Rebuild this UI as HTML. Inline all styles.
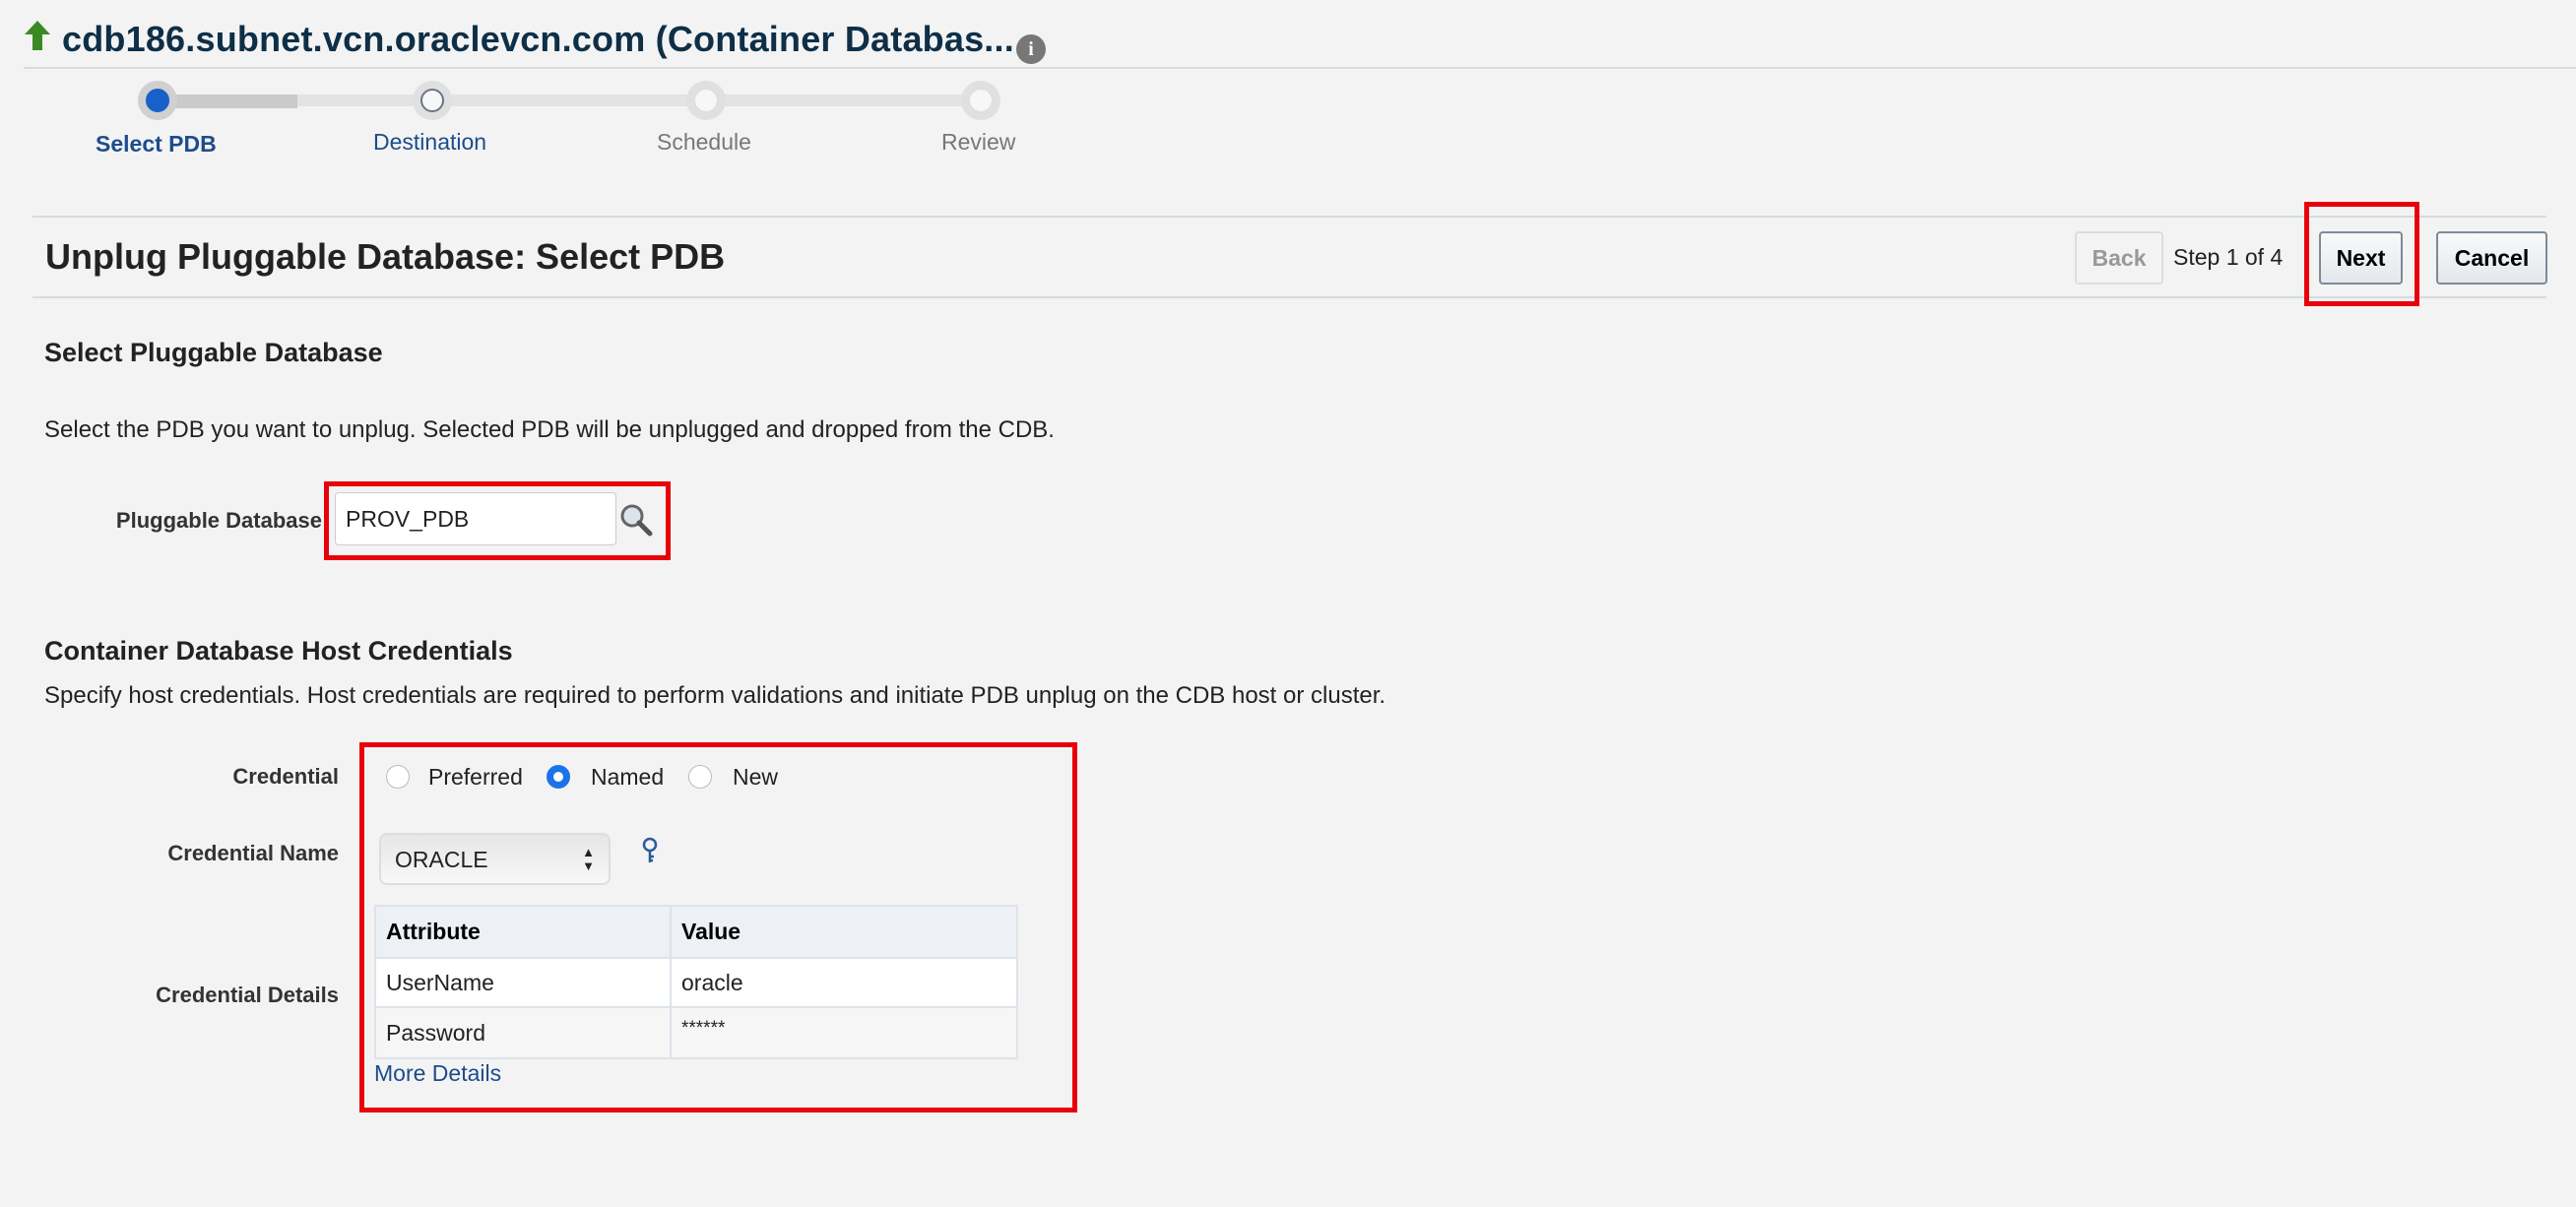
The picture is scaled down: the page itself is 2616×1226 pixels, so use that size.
<!DOCTYPE html>
<html><head><meta charset="utf-8"><style>
*{margin:0;padding:0;box-sizing:border-box}
body{width:2616px;height:1226px;background:#f3f3f3;font-family:"Liberation Sans",Arial,sans-serif;position:relative;overflow:hidden;color:#222}
.a{position:absolute;white-space:nowrap}
.hl{position:absolute;height:2px;background:#d3dce4}
.btn{position:absolute;border:2px solid #7d8a97;border-radius:4px;background:linear-gradient(#f8f9fa,#e4e8ec);font-weight:bold;font-size:23px;text-align:center;color:#000}
.red{position:absolute;border:5px solid #e8000b}
.lbl{position:absolute;font-weight:bold;font-size:22px;color:#333;text-align:right;white-space:nowrap}
.radio{position:absolute;width:24px;height:24px;border-radius:50%;border:1px solid #bbb;background:#fff}
.step{position:absolute;width:40px;height:40px;border-radius:50%;background:#e0e0e0;top:82px}
.step i{position:absolute;left:8px;top:8px;width:24px;height:24px;border-radius:50%;background:#f6f7f8;border:1px solid #ddd}
td{font-size:23px;padding:0 10px;border:2px solid #dde3ea}
</style></head><body>
<svg class="a" style="left:24px;top:20px" width="28" height="32" viewBox="0 0 28 32"><path d="M14 1 L27 15 H19 V31 H9 V15 H1 Z" fill="#3a8a24"/></svg>
<div class="a" style="left:63px;top:19px;font-size:36px;font-weight:bold;color:#0e2f48;letter-spacing:0.2px">cdb186.subnet.vcn.oraclevcn.com (Container Databas...</div>
<div class="a" style="left:1032px;top:35px;width:30px;height:30px;border-radius:50%;background:#777;color:#fff;font-weight:bold;font-size:20px;text-align:center;line-height:30px;font-family:'Liberation Serif',serif">i</div>
<div class="hl" style="left:24px;right:0;top:68px"></div>
<div class="a" style="left:170px;top:96px;width:826px;height:12px;background:#e3e3e3"></div>
<div class="a" style="left:170px;top:96px;width:132px;height:14px;background:#cacaca"></div>
<div class="step" style="left:140px;background:#d0d0d0"><i style="background:#1861c9;border-color:#1861c9"></i></div>
<div class="step" style="left:419px"><i style="border:2px solid #6a7686"></i></div>
<div class="step" style="left:697px"><i></i></div>
<div class="step" style="left:976px"><i></i></div>
<div class="a" style="left:97px;top:133px;font-size:23px;font-weight:bold;color:#1d4c8c">Select PDB</div>
<div class="a" style="left:379px;top:131px;font-size:23px;color:#1d4c8c">Destination</div>
<div class="a" style="left:667px;top:131px;font-size:23px;color:#777">Schedule</div>
<div class="a" style="left:956px;top:131px;font-size:23px;color:#777">Review</div>
<div class="hl" style="left:33px;right:30px;top:219px"></div>
<div class="a" style="left:46px;top:240px;font-size:36px;font-weight:bold;color:#222">Unplug Pluggable Database: Select PDB</div>
<div class="hl" style="left:33px;right:30px;top:301px"></div>
<div class="btn" style="left:2107px;top:235px;width:90px;height:54px;line-height:50px;color:#999;border-color:#ddd;background:#f3f3f3">Back</div>
<div class="a" style="left:2207px;top:248px;font-size:23px">Step 1 of 4</div>
<div class="btn" style="left:2355px;top:235px;width:85px;height:54px;line-height:50px">Next</div>
<div class="red" style="left:2340px;top:205px;width:117px;height:106px"></div>
<div class="btn" style="left:2474px;top:235px;width:113px;height:54px;line-height:50px">Cancel</div>
<div class="a" style="left:45px;top:343px;font-size:27px;font-weight:bold">Select Pluggable Database</div>
<div class="a" style="left:45px;top:423px;font-size:24px">Select the PDB you want to unplug. Selected PDB will be unplugged and dropped from the CDB.</div>
<div class="lbl" style="right:2289px;top:516px">Pluggable Database</div>
<div class="a" style="left:340px;top:500px;width:286px;height:54px;background:#fff;border:1px solid #ccc;border-radius:4px;font-size:23px;line-height:52px;padding-left:10px">PROV_PDB</div>
<svg class="a" style="left:628px;top:510px" width="36" height="36" viewBox="0 0 36 36"><circle cx="14" cy="14" r="10" fill="#dde3ea" stroke="#666" stroke-width="3"/><path d="M21 21 L32 32" stroke="#555" stroke-width="5" stroke-linecap="round"/></svg>
<div class="red" style="left:329px;top:489px;width:352px;height:80px"></div>
<div class="a" style="left:45px;top:646px;font-size:27px;font-weight:bold">Container Database Host Credentials</div>
<div class="a" style="left:45px;top:693px;font-size:24px">Specify host credentials. Host credentials are required to perform validations and initiate PDB unplug on the CDB host or cluster.</div>
<div class="lbl" style="right:2272px;top:776px">Credential</div>
<div class="lbl" style="right:2272px;top:854px">Credential Name</div>
<div class="lbl" style="right:2272px;top:998px">Credential Details</div>
<div class="radio" style="left:392px;top:777px"></div>
<div class="a" style="left:435px;top:776px;font-size:23px">Preferred</div>
<div class="radio" style="left:555px;top:777px;border:7px solid #1a73e8"></div>
<div class="a" style="left:600px;top:776px;font-size:23px">Named</div>
<div class="radio" style="left:699px;top:777px"></div>
<div class="a" style="left:744px;top:776px;font-size:23px">New</div>
<div class="a" style="left:385px;top:846px;width:235px;height:53px;border-radius:8px;border:2px solid #ddd;background:linear-gradient(#e6e6e6,#f8f8f8);font-size:23px;line-height:50px;padding-left:14px">ORACLE<span style="position:absolute;right:14px;top:0;font-size:13px;line-height:14px;padding-top:11px">▲<br>▼</span></div>
<svg class="a" style="left:650px;top:850px" width="20" height="28" viewBox="0 0 20 28"><circle cx="10" cy="8" r="6" fill="none" stroke="#2a5a9a" stroke-width="2.5"/><path d="M10 14 V26 M10 20 H14 M10 24 H13" stroke="#2a5a9a" stroke-width="2.5" fill="none"/></svg>
<table class="a" style="left:380px;top:919px;width:654px;border-collapse:collapse;border:2px solid #d3dae2">
<tr style="height:53px;background:#edf0f4"><td style="width:300px;font-weight:bold;color:#000">Attribute</td><td style="font-weight:bold;color:#000">Value</td></tr>
<tr style="height:50px;background:#fff"><td>UserName</td><td>oracle</td></tr>
<tr style="height:52px;background:#f6f6f6"><td>Password</td><td style="font-size:19px;vertical-align:top;padding-top:10px">******</td></tr>
</table>
<div class="a" style="left:380px;top:1077px;font-size:23px;color:#1d4c8c">More Details</div>
<div class="red" style="left:365px;top:754px;width:729px;height:376px"></div>
</body></html>
